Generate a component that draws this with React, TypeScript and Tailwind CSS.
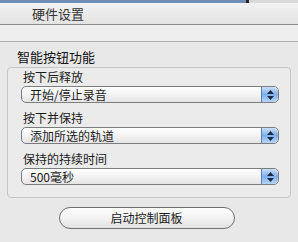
import { ReactNode } from 'react';

const font = { fontFamily: '"Lucida Grande", "Noto Sans CJK SC", sans-serif' };

function Stepper() {
    return (
        <div className="flex h-full w-[17px] flex-col items-center justify-center gap-[2px] rounded-r-[5px] border-l border-[#5a7fb8] bg-gradient-to-b from-[#c9def7] via-[#7fb0ec] to-[#b6d5fa]">
            <svg width="7" height="4" viewBox="0 0 7 4">
                <path d="M3.5 0 L7 4 L0 4 Z" fill="#1c2a44" />
            </svg>
            <svg width="7" height="4" viewBox="0 0 7 4">
                <path d="M0 0 L7 0 L3.5 4 Z" fill="#1c2a44" />
            </svg>
        </div>
    );
}

function Select({ value }: { value: string }) {
    return (
        <div className="flex h-[17px] w-[258px] items-center overflow-hidden rounded-[5px] border border-[#7d7d7d] bg-gradient-to-b from-[#ffffff] via-[#f3f3f3] to-[#e4e4e4]">
            <span className="flex-1 pl-[8px] text-[12px] leading-none text-[#1a1a1a]">{value}</span>
            <Stepper />
        </div>
    );
}

function Field({ label, children }: { label: string; children: ReactNode }) {
    return (
        <div className="flex flex-col">
            <span className="pl-[2px] text-[12px] leading-[14px] text-[#1a1a1a]">{label}</span>
            <div className="mt-[2px]">{children}</div>
        </div>
    );
}

export default function App() {
    return (
        <div className="h-[242px] w-[298px] overflow-hidden bg-[#e8e8e8]" style={font}>
            {/* window strip */}
            <div className="flex h-[3px]">
                <div className="w-[246px] bg-[#6f8db5]" />
                <div className="w-[3px] bg-[#2a2a2a]" />
                <div className="flex-1 bg-[#d8d8d8]" />
            </div>

            {/* tab header */}
            <div className="flex h-[22px] items-center border-b border-[#8e8e8e] bg-gradient-to-b from-[#f2f2f2] to-[#e3e3e3] pl-[32px]">
                <span className="text-[13px] leading-none text-[#333]">硬件设置</span>
            </div>
            <div className="h-[17px] border-b border-[#b4b4b4] bg-[#eeeeee]" />

            {/* content */}
            <div className="px-[7px] pt-[7px]">
                <div className="pl-[10px] text-[13px] leading-[15px] text-[#111]">智能按钮功能</div>
                <div className="mt-[3px] flex h-[131px] w-[284px] flex-col gap-[8px] rounded-[4px] border border-[#c6c6c6] bg-[#ebebeb] pl-[13px] pt-[2px]">
                    <Field label="按下后释放">
                        <Select value="开始/停止录音" />
                    </Field>
                    <Field label="按下并保持">
                        <Select value="添加所选的轨道" />
                    </Field>
                    <Field label="保持的持续时间">
                        <Select value="500毫秒" />
                    </Field>
                </div>

                <div className="mt-[9px] flex justify-center pr-[5px]">
                    <button className="h-[22px] w-[176px] rounded-full border border-[#6e6e6e] bg-gradient-to-b from-[#ffffff] via-[#f2f2f2] to-[#e2e2e2] text-[12px] leading-none text-[#1a1a1a]">
                        启动控制面板
                    </button>
                </div>
            </div>
        </div>
    );
}
